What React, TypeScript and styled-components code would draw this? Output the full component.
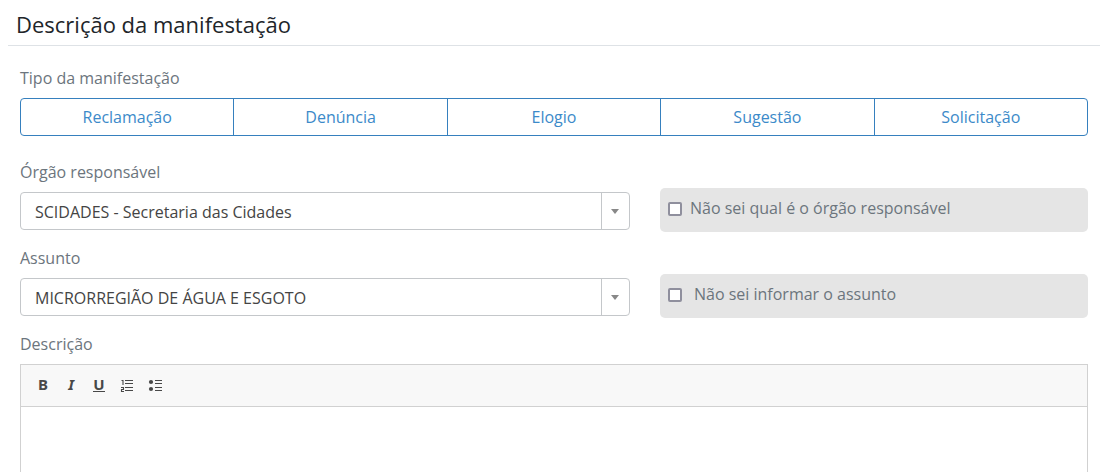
import React, { useState } from "react";
import styled, { createGlobalStyle } from "styled-components";

const GlobalStyle = createGlobalStyle`
  *, *::before, *::after { box-sizing: border-box; }
  body {
    margin: 0;
    background: #fff;
    color: #6c757d;
    font-family: "Open Sans", "Noto Sans", sans-serif;
    font-size: 16px;
    line-height: 24px;
  }
  button, select, input, textarea { font: inherit; }
`;

const Page = styled.main`
  padding: 8px 6px 0 8px;
`;

const Title = styled.h1`
  margin: 0;
  padding: 0 8px 5px;
  border-bottom: 1px solid #dee2e6;
  color: #212529;
  font-size: 22px;
  font-weight: 400;
  line-height: 32px;
`;

const Form = styled.form`
  padding: 20px 12px 0;
`;

const Label = styled.label`
  display: block;
  margin-bottom: 8px;
`;

const TypeField = styled.fieldset`
  min-width: 0;
  margin: 0 0 24px;
  padding: 0;
  border: 0;
`;

const TypeLegend = styled.legend`
  padding: 0;
  margin-bottom: 8px;
`;

const ButtonGroup = styled.div`
  display: flex;
  border: 1px solid #3680be;
  border-radius: 4px;
  overflow: hidden;
`;

const TypeButton = styled.button<{ $active: boolean }>`
  flex: 1 1 0;
  padding: 6px 12px;
  border: 0;
  background: ${(p) => (p.$active ? "#3680be" : "transparent")};
  color: ${(p) => (p.$active ? "#fff" : "#3c8ac9")};
  cursor: pointer;

  &:not(:last-child) { border-right: 1px solid #3680be; }
`;

const Row = styled.div`
  display: grid;
  grid-template-columns: minmax(0, 57fr) minmax(0, 40fr);
  align-items: end;
  gap: 30px;
  margin-bottom: 14px;
`;

const SelectBox = styled.div`
  display: flex;
  position: relative;
  height: 38px;
  margin-bottom: 2px;
`;

const Select = styled.select`
  appearance: none;
  width: 100%;
  padding: 2px 40px 0 14px;
  border: 1px solid #c4c7ca;
  border-radius: 4px;
  background: #fff;
  color: #444;
`;

const SelectArrow = styled.span`
  position: absolute;
  top: 1px;
  right: 1px;
  bottom: 1px;
  display: flex;
  align-items: center;
  justify-content: center;
  width: 28px;
  border-left: 1px solid #c4c7ca;
  pointer-events: none;

  &::before {
    content: "";
    border: 4px solid transparent;
    border-top: 5px solid #888;
    border-bottom: 0;
  }
`;

const CheckPanel = styled.label<{ $gap: number }>`
  display: flex;
  align-items: flex-start;
  gap: ${(p) => p.$gap}px;
  padding: 8px 8px 12px;
  border-radius: 5px;
  background: #e5e5e5;
`;

const CheckBox = styled.input`
  appearance: none;
  flex: none;
  width: 14px;
  height: 14px;
  margin: 6px 0 0;
  border: 2px solid #8f8f9d;
  border-radius: 2px;
  background: #fff;

  &:checked { background: #3680be; }
`;

const Editor = styled.div`
  border: 1px solid #d1d1d1;
`;

const Toolbar = styled.div`
  display: flex;
  gap: 4px;
  padding: 7px 10px 10px;
  border-bottom: 1px solid #d1d1d1;
  background: #f8f8f8;
`;

const ToolButton = styled.button`
  display: flex;
  align-items: center;
  justify-content: center;
  width: 24px;
  height: 24px;
  padding: 0;
  border: 0;
  background: transparent;
  color: #484848;
`;

const ToolLetter = styled.span<{ $italic?: boolean; $underline?: boolean }>`
  min-width: 11px;
  height: 16px;
  border-bottom: 1px solid ${(p) => (p.$underline ? "#484848" : "transparent")};
  font-family: "Noto Sans", sans-serif;
  font-size: 15px;
  font-style: ${(p) => (p.$italic ? "italic" : "normal")};
  font-weight: 700;
  line-height: 16px;
  text-align: center;
`;

const TextArea = styled.textarea`
  display: block;
  width: 100%;
  height: 200px;
  padding: 12px;
  border: 0;
  outline: 0;
  resize: none;
`;

const types = ["Reclamação", "Denúncia", "Elogio", "Sugestão", "Solicitação"];

function SelectField({ id, label, value }: { id: string; label: string; value: string }) {
  return (
    <div>
      <Label htmlFor={id}>{label}</Label>
      <SelectBox>
        <Select id={id} defaultValue={value}>
          <option>{value}</option>
        </Select>
        <SelectArrow />
      </SelectBox>
    </div>
  );
}

function CheckField({ label, gap }: { label: string; gap: number }) {
  return (
    <CheckPanel $gap={gap}>
      <CheckBox type="checkbox" />
      <span>{label}</span>
    </CheckPanel>
  );
}

export default function App() {
  const [active, setActive] = useState<string | null>(null);
  return (
    <>
      <GlobalStyle />
      <Page>
        <Title>Descrição da manifestação</Title>
        <Form>
          <TypeField>
            <TypeLegend>Tipo da manifestação</TypeLegend>
            <ButtonGroup>
              {types.map((t) => (
                <TypeButton key={t} type="button" $active={t === active} onClick={() => setActive(t)}>
                  {t}
                </TypeButton>
              ))}
            </ButtonGroup>
          </TypeField>
          <Row>
            <SelectField id="orgao" label="Órgão responsável" value="SCIDADES - Secretaria das Cidades" />
            <CheckField label="Não sei qual é o órgão responsável" gap={8} />
          </Row>
          <Row>
            <SelectField id="assunto" label="Assunto" value="MICRORREGIÃO DE ÁGUA E ESGOTO" />
            <CheckField label="Não sei informar o assunto" gap={12} />
          </Row>
          <Label htmlFor="descricao">Descrição</Label>
          <Editor>
            <Toolbar>
              <ToolButton type="button" aria-label="Negrito">
                <ToolLetter>B</ToolLetter>
              </ToolButton>
              <ToolButton type="button" aria-label="Itálico">
                <ToolLetter $italic>I</ToolLetter>
              </ToolButton>
              <ToolButton type="button" aria-label="Sublinhado">
                <ToolLetter $underline>U</ToolLetter>
              </ToolButton>
              <ToolButton type="button" aria-label="Lista numerada">
                <svg width="14" height="16" viewBox="0 0 14 16" fill="none" stroke="currentColor">
                  <path d="M5 4.5h8M5 7.5h8M5 11.5h8M5 14.5h8" strokeWidth="1.2" />
                  <path d="M1.5 4.5h1.5V9M1 11.5h2.5v2H1.5v2H4" strokeWidth="1.1" />
                </svg>
              </ToolButton>
              <ToolButton type="button" aria-label="Lista com marcadores">
                <svg width="14" height="16" viewBox="0 0 14 16" fill="none" stroke="currentColor">
                  <path d="M7 4.5h7M7 7.5h7M7 11.5h7M7 14.5h7" strokeWidth="1.2" />
                  <g fill="currentColor" stroke="none">
                    <circle cx="3" cy="6" r="2.1" />
                    <circle cx="3" cy="13" r="2.1" />
                  </g>
                </svg>
              </ToolButton>
            </Toolbar>
            <TextArea id="descricao" />
          </Editor>
        </Form>
      </Page>
    </>
  );
}
